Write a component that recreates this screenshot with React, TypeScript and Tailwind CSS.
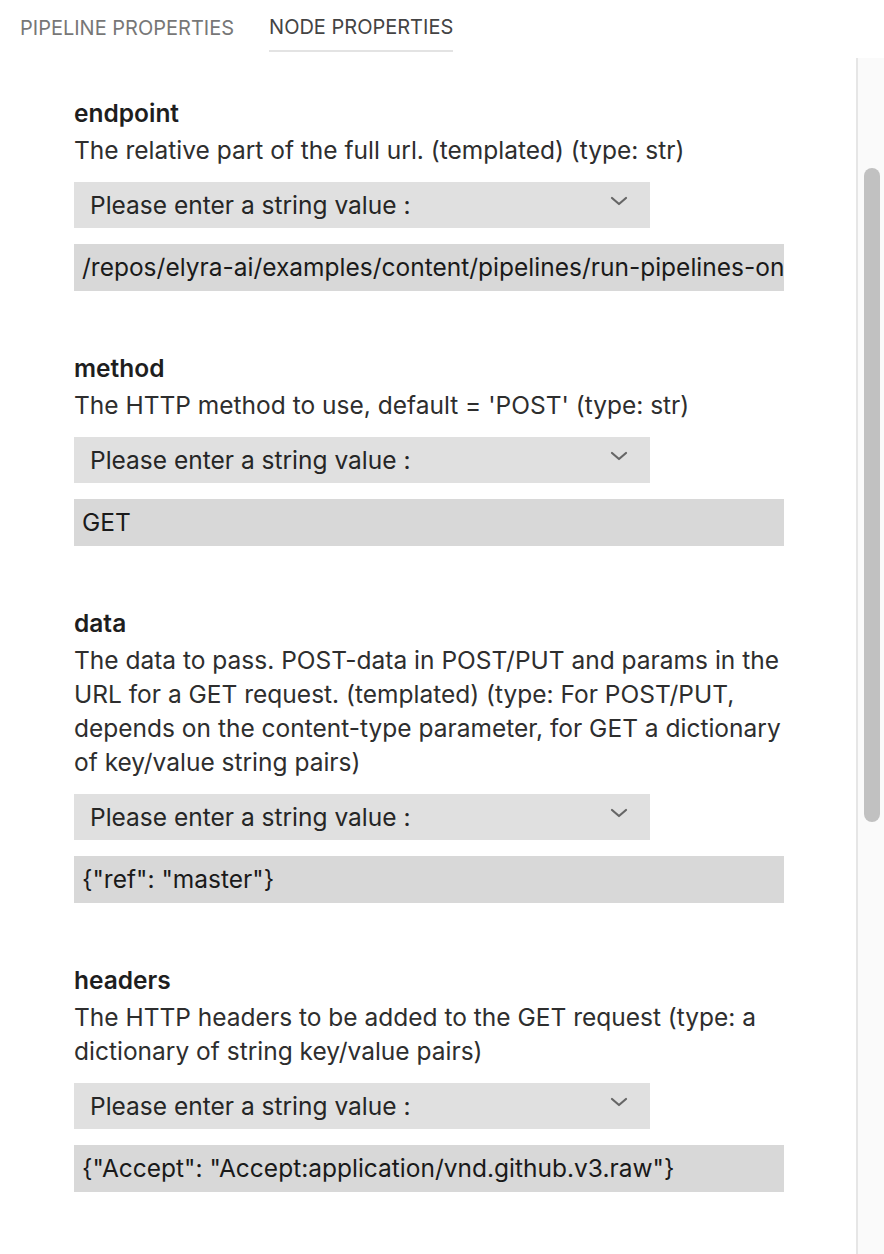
import React from "react";

type Field = {
  title: string;
  desc: string[];
  value: string;
};

const fields: Field[] = [
  {
    title: "endpoint",
    desc: ["The relative part of the full url. (templated) (type: str)"],
    value: "/repos/elyra-ai/examples/content/pipelines/run-pipelines-on-kubeflow-pipelines",
  },
  {
    title: "method",
    desc: ["The HTTP method to use, default = 'POST' (type: str)"],
    value: "GET",
  },
  {
    title: "data",
    desc: [
      "The data to pass. POST-data in POST/PUT and params in the",
      "URL for a GET request. (templated) (type: For POST/PUT,",
      "depends on the content-type parameter, for GET a dictionary",
      "of key/value string pairs)",
    ],
    value: '{"ref": "master"}',
  },
  {
    title: "headers",
    desc: [
      "The HTTP headers to be added to the GET request (type: a",
      "dictionary of string key/value pairs)",
    ],
    value: '{"Accept": "Accept:application/vnd.github.v3.raw"}',
  },
];

function Chevron() {
  return (
    <svg width="18" height="12" viewBox="0 0 18 12" fill="none" className="-mt-[8px]">
      <path d="M2 3 L9 9 L16 3" stroke="#666" strokeWidth="2.2" strokeLinecap="round" strokeLinejoin="round" />
    </svg>
  );
}

function FieldBlock({ f }: { f: Field }) {
  return (
    <div className="flex flex-col">
      <div className="h-[34px] leading-[34px] text-[24.5px] font-semibold text-[#1e1e1e]">{f.title}</div>
      <div className="mt-[3px] text-[24.5px] leading-[34px] text-[#2e2e2e]">
        {f.desc.map((d, i) => (
          <div key={i} className="whitespace-nowrap">{d}</div>
        ))}
      </div>
      <div className="mt-[15px] w-[576px] h-[46px] bg-[#e0e0e0] flex items-center justify-between pl-[16px] pr-[22px]">
        <span className="text-[24.5px] text-[#262626]">Please enter a string value :</span>
        <Chevron />
      </div>
      <div className="mt-[16px] w-[710px] h-[47px] bg-[#d8d8d8] flex items-center px-[8px] overflow-hidden">
        <span className="text-[24.5px] text-[#1a1a1a] whitespace-nowrap">{f.value}</span>
      </div>
    </div>
  );
}

export default function App() {
  return (
    <div
      className="w-[884px] h-[1254px] bg-white flex flex-col overflow-hidden"
      style={{ fontFamily: "Inter, 'Noto Sans', sans-serif" }}
    >
      <div className="h-[58px] flex items-start pl-[20px] gap-[35px] shrink-0">
        <div className="h-[52px] flex items-center pt-[4px] text-[20px] text-[#777]">PIPELINE PROPERTIES</div>
        <div className="h-[52px] flex items-center pt-[4px] border-b-2 border-[#e3e3e3] text-[20px] text-[#444]">
          NODE PROPERTIES
        </div>
      </div>
      <div className="flex flex-1 min-h-0">
        <div className="flex-1 pl-[74px] pt-[38px] flex flex-col gap-[60px]">
          {fields.map((f) => (
            <FieldBlock key={f.title} f={f} />
          ))}
        </div>
        <div className="w-[28px] border-l-2 border-[#e6e6e6] bg-[#fafafa] flex flex-col pt-[110px] pl-[6px]">
          <div className="w-[16px] h-[654px] rounded-full bg-[#c1c1c1]" />
        </div>
      </div>
    </div>
  );
}
